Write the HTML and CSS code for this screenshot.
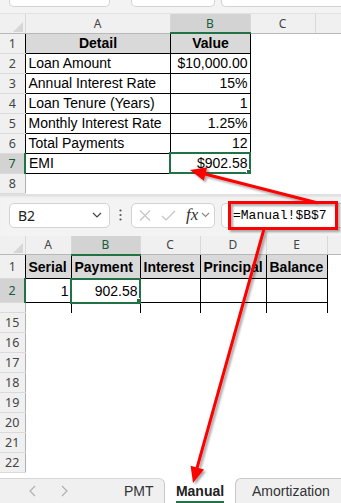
FILE: index.html
```html
<!DOCTYPE html>
<html lang="en">
<head>
    <meta charset="UTF-8">
    <meta name="viewport" content="width=device-width, initial-scale=1.0">
    <title>EMI Sheet</title>
    <link rel="stylesheet" href="styles.css">
</head>
<body>
    <!-- bottom of the formula bar above the first sheet -->
    <div class="stub">
        <div class="stub-box stub-name"></div>
        <div class="stub-box stub-fx"></div>
        <div class="stub-box stub-input"></div>
    </div>

    <table class="sheet s1">
        <colgroup>
            <col class="w-rh"><col class="w-145"><col class="w-80"><col class="w-65"><col class="w-26">
        </colgroup>
        <tr class="hdr">
            <th class="corner"><svg width="10" height="10" viewBox="0 0 10 10"><polygon points="10,0 10,10 0,10" fill="#d6d6d6"/></svg></th>
            <th>A</th><th class="hsel">B</th><th>C</th><th></th>
        </tr>
        <tr class="r20"><th class="rh k">1</th><td class="b head">Detail</td><td class="b head">Value</td><td></td><td></td></tr>
        <tr class="r20"><th class="rh k">2</th><td class="b">Loan Amount</td><td class="b num">$10,000.00</td><td></td><td></td></tr>
        <tr class="r20"><th class="rh k">3</th><td class="b">Annual Interest Rate</td><td class="b num">15%</td><td></td><td></td></tr>
        <tr class="r20"><th class="rh k">4</th><td class="b">Loan Tenure (Years)</td><td class="b num">1</td><td></td><td></td></tr>
        <tr class="r20"><th class="rh k">5</th><td class="b">Monthly Interest Rate</td><td class="b num">1.25%</td><td></td><td></td></tr>
        <tr class="r20"><th class="rh k">6</th><td class="b">Total Payments</td><td class="b num">12</td><td></td><td></td></tr>
        <tr class="r20"><th class="rh rsel">7</th><td class="b">EMI</td><td class="b num sel">$902.58</td><td></td><td></td></tr>
        <tr class="r20"><th class="rh">8</th><td></td><td></td><td></td><td></td></tr>
    </table>

    <div class="fbar">
        <div class="namebox">
            <span>B2</span>
            <svg width="10" height="6" viewBox="0 0 10 6"><polyline points="1,1 5,5 9,1" fill="none" stroke="#444" stroke-width="1.2"/></svg>
        </div>
        <div class="dots">
            <svg width="3" height="12" viewBox="0 0 3 12"><circle cx="1.5" cy="1.5" r="1.1" fill="#555"/><circle cx="1.5" cy="6" r="1.1" fill="#555"/><circle cx="1.5" cy="10.5" r="1.1" fill="#555"/></svg>
        </div>
        <div class="fxbox">
            <svg width="12" height="11" viewBox="0 0 12 11"><path d="M1 0.5 L11 10.5 M11 0.5 L1 10.5" stroke="#c4c4c4" stroke-width="1.2"/></svg>
            <svg width="15" height="11" viewBox="0 0 15 11"><polyline points="1,6 5,10 14,1" fill="none" stroke="#c4c4c4" stroke-width="1.2"/></svg>
            <span class="fx">fx</span>
            <svg width="9" height="6" viewBox="0 0 9 6"><polyline points="1,1 4.5,4.5 8,1" fill="none" stroke="#888" stroke-width="1.1"/></svg>
        </div>
        <div class="formula">=Manual!$B$7</div>
    </div>

    <table class="sheet s2">
        <colgroup>
            <col class="w-rh"><col class="w-46"><col class="w-69"><col class="w-60"><col class="w-66"><col class="w-61"><col class="w-14">
        </colgroup>
        <tr class="hdr">
            <th class="corner"><svg width="10" height="10" viewBox="0 0 10 10"><polygon points="10,0 10,10 0,10" fill="#d6d6d6"/></svg></th>
            <th>A</th><th class="hsel">B</th><th>C</th><th>D</th><th>E</th><th></th>
        </tr>
        <tr class="r24"><th class="rh k">1</th><td class="b head left">Serial</td><td class="b head left">Payment</td><td class="b head left">Interest</td><td class="b head left">Principal</td><td class="b head left">Balance</td><td></td></tr>
        <tr class="r24"><th class="rh rsel">2</th><td class="b num">1</td><td class="b num sel">902.58</td><td class="b"></td><td class="b"></td><td class="b"></td><td></td></tr>
        <tr class="r10"><th class="rh"></th><td class="v"></td><td class="v"></td><td class="v"></td><td class="v"></td><td class="v"></td><td></td></tr>
        <tr class="r20"><th class="rh">15</th><td></td><td></td><td></td><td></td><td></td><td></td></tr>
        <tr class="r20"><th class="rh">16</th><td></td><td></td><td></td><td></td><td></td><td></td></tr>
        <tr class="r20"><th class="rh">17</th><td></td><td></td><td></td><td></td><td></td><td></td></tr>
        <tr class="r20"><th class="rh">18</th><td></td><td></td><td></td><td></td><td></td><td></td></tr>
        <tr class="r20"><th class="rh">19</th><td></td><td></td><td></td><td></td><td></td><td></td></tr>
        <tr class="r20"><th class="rh">20</th><td></td><td></td><td></td><td></td><td></td><td></td></tr>
        <tr class="r20"><th class="rh">21</th><td></td><td></td><td></td><td></td><td></td><td></td></tr>
        <tr class="r20"><th class="rh">22</th><td></td><td></td><td></td><td></td><td></td><td></td></tr>
    </table>

    <div class="tabs">
        <div class="tab-left">
            <svg class="nav" width="8" height="12" viewBox="0 0 8 12"><polyline points="7,1 2,6 7,11" fill="none" stroke="#b0b0b0" stroke-width="1.2"/></svg>
            <svg class="nav" width="8" height="12" viewBox="0 0 8 12"><polyline points="1,1 6,6 1,11" fill="none" stroke="#b0b0b0" stroke-width="1.2"/></svg>
            <span class="tab-name">PMT</span>
        </div>
        <div class="tab-active"><span>Manual</span></div>
        <div class="tab-right"><span class="tab-name">Amortization</span></div>
    </div>

    <!-- callout annotations drawn over the screenshot -->
    <svg class="notes" width="341" height="503" viewBox="0 0 341 503">
        <defs>
            <filter id="shadow" x="-20%" y="-20%" width="140%" height="140%">
                <feDropShadow dx="2" dy="2" stdDeviation="1.2" flood-color="#000" flood-opacity="0.35"/>
            </filter>
        </defs>
        <g filter="url(#shadow)">
            <rect x="229.5" y="202.5" width="107" height="26" fill="none" stroke="#ff0000" stroke-width="3"/>
            <line x1="318" y1="203" x2="205" y2="174" stroke="#ff0000" stroke-width="3"/>
            <polygon points="190,170 207.3,167.2 203.8,180.8" fill="#ff0000"/>
            <line x1="264" y1="229" x2="197" y2="468" stroke="#ff0000" stroke-width="3"/>
            <polygon points="193,483 190.6,465.7 204,469.5" fill="#ff0000"/>
        </g>
    </svg>
</body>
</html>
```

FILE: styles.css
```css
* {
    box-sizing: border-box;
}
body {
    margin: 0;
    width: 341px;
    height: 503px;
    overflow: hidden;
    position: relative;
    background-color: white;
    font-family: "Liberation Sans", Arial, sans-serif;
    font-size: 14px;
    color: #000;
}

/* formula bar stub at the very top */
.stub {
    height: 14px;
    display: flex;
    background-color: #f3f3f3;
    border-bottom: 1px solid #e2e2e2;
}
.stub-box {
    height: 7px;
    background-color: white;
    border: 1px solid #d2d2d2;
    border-top: none;
    border-radius: 0 0 5px 5px;
}
.stub-name {
    margin-left: 9px;
    width: 101px;
}
.stub-fx {
    margin-left: 21px;
    width: 84px;
}
.stub-input {
    margin-left: 6px;
    width: 120px;
    border-right: none;
    border-radius: 0 0 0 5px;
}

/* sheet grids */
.sheet {
    border-collapse: collapse;
    table-layout: fixed;
    width: 341px;
}
.w-rh { width: 25px; }
.w-145 { width: 145px; }
.w-80 { width: 80px; }
.w-65 { width: 65px; }
.w-26 { width: 26px; }
.w-60 { width: 60px; }
.w-46 { width: 46px; }
.w-69 { width: 69px; }
.w-66 { width: 66px; }
.w-61 { width: 61px; }
.w-14 { width: 14px; }

.sheet td, .sheet th {
    padding: 0 2px 0 3px;
    white-space: nowrap;
    overflow: hidden;
}
.hdr {
    height: 19px;
}
.hdr th {
    background-color: #f0f0f0;
    font-family: "Noto Sans", sans-serif;
    font-size: 12px;
    font-weight: normal;
    color: #444;
    text-align: center;
    border-right: 1px solid #d8d8d8;
    border-bottom: 1px solid #b8b8b8;
    padding: 0;
}
.hdr th.corner {
    text-align: right;
    vertical-align: bottom;
    padding: 0 2px 1px 0;
    line-height: 0;
}
.hdr th.hsel {
    background-color: #d3d3d3;
    color: #185c37;
    border-bottom: 2px solid #217346;
}
.r20 { height: 20px; }
.r24 { height: 24px; }
.r10 { height: 10px; }

.rh {
    background-color: #f0f0f0;
    font-family: "Noto Sans", sans-serif;
    font-size: 12.5px;
    font-weight: normal;
    color: #444;
    text-align: center;
    border-right: 1px solid #b0b0b0;
    border-bottom: 1px solid #dadada;
}
.sheet .rh {
    padding: 0;
}
.rh.k {
    border-right: 1px solid #000;
}
.rh.rsel {
    background-color: #d3d3d3;
    color: #185c37;
    border-right: 2px solid #217346;
}

.b {
    border: 1px solid #000;
}
.v {
    border-left: 1px solid #000;
    border-right: 1px solid #000;
}
.head {
    background-color: #d9d9d9;
    font-weight: bold;
    text-align: center;
}
.head.left {
    text-align: left;
}
.num {
    text-align: right;
}
.sel {
    position: relative;
    outline: 2px solid #217346;
    outline-offset: -1px;
}
.sel::after {
    content: "";
    position: absolute;
    right: -4px;
    bottom: -4px;
    width: 6px;
    height: 6px;
    background-color: #217346;
    border: 1px solid white;
}

/* formula bar */
.fbar {
    height: 42px;
    display: flex;
    align-items: center;
    background-color: #f3f3f3;
    border-top: 1px solid #e0e0e0;
    box-shadow: inset 0 3px 3px -2px rgba(0,0,0,0.12);
}
.namebox, .fxbox, .formula {
    height: 25px;
    background-color: white;
    border: 1px solid #d2d2d2;
    border-radius: 5px;
    display: flex;
    align-items: center;
}
.namebox {
    margin-left: 9px;
    width: 101px;
    padding: 0 7px 0 8px;
    justify-content: space-between;
    font-family: "Noto Sans", sans-serif;
    font-size: 14px;
    color: #222;
}
.dots {
    width: 21px;
    display: flex;
    justify-content: center;
}
.fxbox {
    width: 84px;
    padding-left: 7px;
    gap: 10px;
}
.fx {
    font-family: "Liberation Serif", serif;
    font-style: italic;
    font-size: 17px;
    color: #333;
    margin-right: -7px;
}
.formula {
    margin-left: 6px;
    width: 120px;
    padding-left: 11px;
    border-right: none;
    border-radius: 5px 0 0 5px;
    font-family: "Liberation Mono", monospace;
    font-size: 13px;
}

/* sheet tabs */
.tabs {
    margin-top: 5px;
    height: 25px;
    display: flex;
    font-size: 14px;
    color: #333;
}
.tab-left {
    width: 165px;
    display: flex;
    align-items: center;
    background-color: #f0f0f0;
    border-top: 1px solid #d6d6d6;
    border-right: 1px solid #c8c8c8;
    border-radius: 0 6px 0 0;
    padding-left: 28px;
}
.nav {
    margin-right: 25px;
}
.tab-left .tab-name {
    margin-left: 30px;
}
.tab-active {
    width: 70px;
    display: flex;
    justify-content: center;
    align-items: flex-end;
    font-weight: bold;
    color: #222;
}
.tab-active span {
    border-bottom: 2px solid #217346;
    padding-bottom: 2px;
}
.tab-right {
    flex: 1;
    display: flex;
    align-items: center;
    background-color: #f0f0f0;
    border-top: 1px solid #c8c8c8;
    border-left: 1px solid #c8c8c8;
    border-radius: 6px 0 0 0;
}
.tab-right .tab-name {
    margin-left: 16px;
}

.notes {
    position: absolute;
    top: 0;
    left: 0;
    pointer-events: none;
}
```
